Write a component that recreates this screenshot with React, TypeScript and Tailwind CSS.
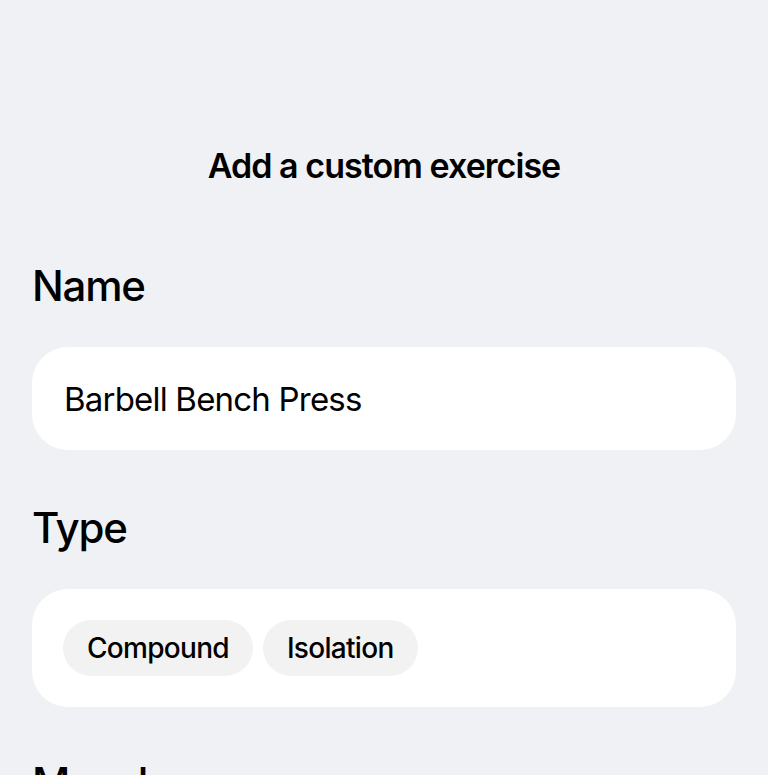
export default function App() {
  const font = { fontFamily: 'Inter, "Noto Sans", sans-serif' };
  return (
    <div className="min-h-[775px] h-[775px] overflow-hidden bg-[#f0f1f5] text-black" style={font}>
      <div className="px-8 pt-[146px]">
        <h1 className="text-center text-[34px] leading-[40px] font-semibold tracking-[-0.95px]">Add a custom exercise</h1>
        <h2 className="mt-[76px] text-[42px] leading-[48px] font-medium tracking-[-1.2px]">Name</h2>
        <div className="mt-[37px] h-[103px] rounded-[36px] bg-white flex items-center px-8">
          <span className="mt-[3px] text-[33px] tracking-[-0.8px]">Barbell Bench Press</span>
        </div>
        <h2 className="mt-[54px] text-[42px] leading-[48px] font-medium tracking-[-1.2px]">Type</h2>
        <div className="mt-[37px] h-[118px] rounded-[36px] bg-white flex items-center gap-[10px] pl-[31px]">
          <span className="h-[56px] flex items-center px-6 rounded-full bg-[#f2f2f2] text-[28px] font-medium tracking-[-0.7px]">Compound</span>
          <span className="h-[56px] flex items-center px-6 rounded-full bg-[#f2f2f2] text-[28px] font-medium tracking-[-0.7px]">Isolation</span>
        </div>
        <h2 className="mt-[52px] text-[42px] leading-[48px] font-medium tracking-[-1.2px]">Muscles</h2>
      </div>
    </div>
  );
}
